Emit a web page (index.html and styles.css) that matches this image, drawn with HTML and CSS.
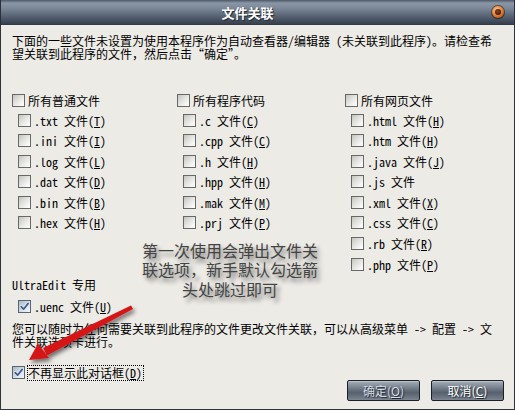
FILE: index.html
```html
<!DOCTYPE html>
<html lang="zh-CN">
<head>
<meta charset="utf-8">
<title>文件关联</title>
<link rel="stylesheet" href="styles.css">
</head>
<body>
<div class="window">
  <div class="titlebar">
    <span class="title">文件关联</span>
    <span class="close"><span class="close-core"></span></span>
  </div>
  <div class="body">
    <p class="intro">下面的一些文件未设置为使用本程序作为自动查看器/编辑器 (未关联到此程序)。请检查希<br>望关联到此程序的文件，然后点击“确定”。</p>

    <div class="groups">
      <div class="group">
        <div class="row head"><span class="cb"></span><span>所有普通文件</span></div>
        <div class="row item"><span class="cb"></span><span>.txt 文件(<u>T</u>)</span></div>
        <div class="row item"><span class="cb"></span><span>.ini 文件(<u>I</u>)</span></div>
        <div class="row item"><span class="cb"></span><span>.log 文件(<u>L</u>)</span></div>
        <div class="row item"><span class="cb"></span><span>.dat 文件(<u>D</u>)</span></div>
        <div class="row item"><span class="cb"></span><span>.bin 文件(<u>B</u>)</span></div>
        <div class="row item"><span class="cb"></span><span>.hex 文件(<u>H</u>)</span></div>
      </div>
      <div class="group">
        <div class="row head"><span class="cb"></span><span>所有程序代码</span></div>
        <div class="row item"><span class="cb"></span><span>.c 文件(<u>C</u>)</span></div>
        <div class="row item"><span class="cb"></span><span>.cpp 文件(<u>C</u>)</span></div>
        <div class="row item"><span class="cb"></span><span>.h 文件(<u>H</u>)</span></div>
        <div class="row item"><span class="cb"></span><span>.hpp 文件(<u>H</u>)</span></div>
        <div class="row item"><span class="cb"></span><span>.mak 文件(<u>M</u>)</span></div>
        <div class="row item"><span class="cb"></span><span>.prj 文件(<u>P</u>)</span></div>
      </div>
      <div class="group">
        <div class="row head"><span class="cb"></span><span>所有网页文件</span></div>
        <div class="row item"><span class="cb"></span><span>.html 文件(<u>H</u>)</span></div>
        <div class="row item"><span class="cb"></span><span>.htm 文件(<u>H</u>)</span></div>
        <div class="row item"><span class="cb"></span><span>.java 文件(<u>J</u>)</span></div>
        <div class="row item"><span class="cb"></span><span>.js 文件</span></div>
        <div class="row item"><span class="cb"></span><span>.xml 文件(<u>X</u>)</span></div>
        <div class="row item"><span class="cb"></span><span>.css 文件(<u>C</u>)</span></div>
        <div class="row item"><span class="cb"></span><span>.rb 文件(<u>R</u>)</span></div>
        <div class="row item"><span class="cb"></span><span>.php 文件(<u>P</u>)</span></div>
      </div>
    </div>

    <p class="section">UltraEdit 专用</p>
    <div class="row item uenc"><span class="cb on"><svg viewBox="0 0 11 11" width="11" height="11"><path d="M2.2 5.6 L4.6 8.2 L9.2 2.4" fill="none" stroke="#fff" stroke-width="3" stroke-linecap="round" stroke-linejoin="round" opacity=".7"/><path d="M2.2 5.6 L4.6 8.2 L9.2 2.4" fill="none" stroke="#3b5d8f" stroke-width="1.8" stroke-linecap="round" stroke-linejoin="round"/></svg></span><span>.uenc 文件(<u>U</u>)</span></div>

    <p class="note">您可以随时为任何需要关联到此程序的文件更改文件关联，可以从高级菜单 -&gt; 配置 -&gt; 文<br>件关联选项卡进行。</p>

    <div class="footer">
      <div class="row dontshow"><span class="cb on"><svg viewBox="0 0 11 11" width="11" height="11"><path d="M2.2 5.6 L4.6 8.2 L9.2 2.4" fill="none" stroke="#fff" stroke-width="3" stroke-linecap="round" stroke-linejoin="round" opacity=".7"/><path d="M2.2 5.6 L4.6 8.2 L9.2 2.4" fill="none" stroke="#3b5d8f" stroke-width="1.8" stroke-linecap="round" stroke-linejoin="round"/></svg></span><span class="focus">不再显示此对话框(<u>D</u>)</span></div>
      <div class="buttons">
        <button class="btn ok">确定(<u>O</u>)</button>
        <button class="btn cancel">取消(<u>C</u>)</button>
      </div>
    </div>
  </div>

  <div class="annotation">第一次使用会弹出文件关<br>联选项，新手默认勾选箭<br>头处跳过即可</div>

  <svg class="arrow" width="515" height="410" viewBox="0 0 515 410">
    <defs>
      <filter id="sh" x="-20%" y="-20%" width="140%" height="140%">
        <feDropShadow dx="2" dy="3" stdDeviation="2" flood-color="#000" flood-opacity="0.55"/>
      </filter>
    </defs>
    <g filter="url(#sh)" fill="#d41515">
      <polygon points="131,305.5 133,309 47,355.5 43,348"/>
      <polygon points="29,360 38,343.5 49,358"/>
    </g>
  </svg>
</div>
</body>
</html>
```

FILE: styles.css
```css
* { box-sizing: border-box; }
html, body { margin: 0; padding: 0; }
body {
  width: 515px;
  height: 410px;
  overflow: hidden;
  background: #ecebe6;
  font-family: "Noto Sans Mono CJK SC", "Liberation Mono", "Noto Sans CJK SC", monospace;
  font-size: 12px;
  color: #000;
}
.window {
  position: relative;
  width: 515px;
  height: 410px;
  display: flex;
  flex-direction: column;
  background: #ecebe6;
}
.titlebar {
  flex: none;
  height: 25px;
  display: flex;
  align-items: center;
  padding: 0 10px 0 12px;
  background: linear-gradient(to bottom, #4d5867 0px, #8996a5 3px, #7d8999 8px, #606d7d 14px, #465262 20px, #36404e 24px, #2c3440 25px);
  border-left: 1px solid #2a3038;
  border-right: 1px solid #2a3038;
}
.title {
  flex: 1;
  text-align: center;
  font-family: "Noto Sans CJK SC", sans-serif;
  font-weight: bold;
  font-size: 13px;
  color: #fff;
  text-shadow: 1px 1px 1px #1e2630;
  margin-right: 10px;
  line-height: 25px;
}
.close {
  flex: none;
  width: 12px;
  height: 12px;
  border-radius: 50%;
  margin-top: -1px;
  display: flex;
  align-items: center;
  justify-content: center;
  background: radial-gradient(circle at 40% 35%, #ffd0a0 0, #f0964a 35%, #c8601e 70%, #8a3a10 100%);
  box-shadow: 0 0 0 1px rgba(50, 30, 20, 0.6), 0 1px 1px rgba(0, 0, 0, 0.4);
}
.close-core {
  width: 6px;
  height: 6px;
  border-radius: 50%;
  background: radial-gradient(circle at 45% 40%, #8a4a28 0, #4a1e08 60%, #2a1004 100%);
}
.body {
  flex: 1;
  display: flex;
  flex-direction: column;
  padding: 9px 10px 0 11px;
  border-left: 1px solid #2e343c;
  border-right: 1px solid #2e343c;
  border-bottom: 1px solid #2e343c;
}
p { margin: 0; }
.intro, .note {
  line-height: 13px;
  white-space: nowrap;
}
.groups {
  margin-top: 34px;
  display: grid;
  grid-template-columns: 165px 168px 1fr;
  align-items: start;
}
.group {
  display: flex;
  flex-direction: column;
  gap: 7.6px;
}
.row {
  display: flex;
  align-items: center;
  height: 13px;
  line-height: 13px;
  white-space: nowrap;
}
.head { margin-bottom: -1.1px; }
.item { padding-left: 6px; }
.cb {
  flex: none;
  width: 13px;
  height: 13px;
  margin-right: 3px;
  border: 1px solid #686868;
  background: linear-gradient(135deg, #c4c4bf 0%, #dcdcd8 35%, #f4f4f2 75%, #ffffff 100%);
  display: flex;
  align-items: center;
  justify-content: center;
}
.cb.on {
  background: linear-gradient(135deg, #a9b6c6 0%, #c9d3de 40%, #e8edf2 80%, #f6f8fa 100%);
  border-color: #5a6470;
}
.cb svg { display: block; }
u { text-decoration: underline; text-underline-offset: 1px; }
.section {
  margin-top: 7px;
  line-height: 13px;
}
.uenc { margin-top: 9px; }
.note { margin-top: 9px; }
.footer {
  margin-top: 17px;
  display: flex;
  justify-content: space-between;
  align-items: flex-start;
}
.dontshow { height: 16px; }
.dontshow .cb { margin-right: 2px; }
.focus {
  border: 1px dotted #000;
  height: 16px;
  line-height: 14px;
  padding: 0 1px 0 0;
}
.buttons {
  margin-top: 15px;
  display: flex;
  gap: 11px;
}
.btn {
  width: 73px;
  height: 21px;
  padding: 0;
  border: 1px solid #1c2026;
  border-radius: 2px;
  font-family: "Noto Sans CJK SC", sans-serif;
  font-size: 12px;
  line-height: 19px;
  color: #fff;
  text-shadow: 1px 1px 1px #20262e;
  background: linear-gradient(to bottom, #a7b0ba 0%, #8a95a1 20%, #66717d 48%, #56616d 60%, #6a7581 85%, #7d8894 100%);
  box-shadow: inset 0 1px 0 rgba(255, 255, 255, 0.25);
}
.btn.ok { color: #d4dde8; }
.annotation {
  position: absolute;
  left: 130px;
  top: 240.5px;
  width: 200px;
  text-align: center;
  font-family: "Noto Sans CJK SC", sans-serif;
  font-size: 16px;
  line-height: 19.5px;
  color: #444444;
  text-shadow: 3px 4px 4px rgba(0, 0, 0, 0.5);
  white-space: nowrap;
}
.arrow {
  position: absolute;
  left: 0;
  top: 0;
  pointer-events: none;
}
```
